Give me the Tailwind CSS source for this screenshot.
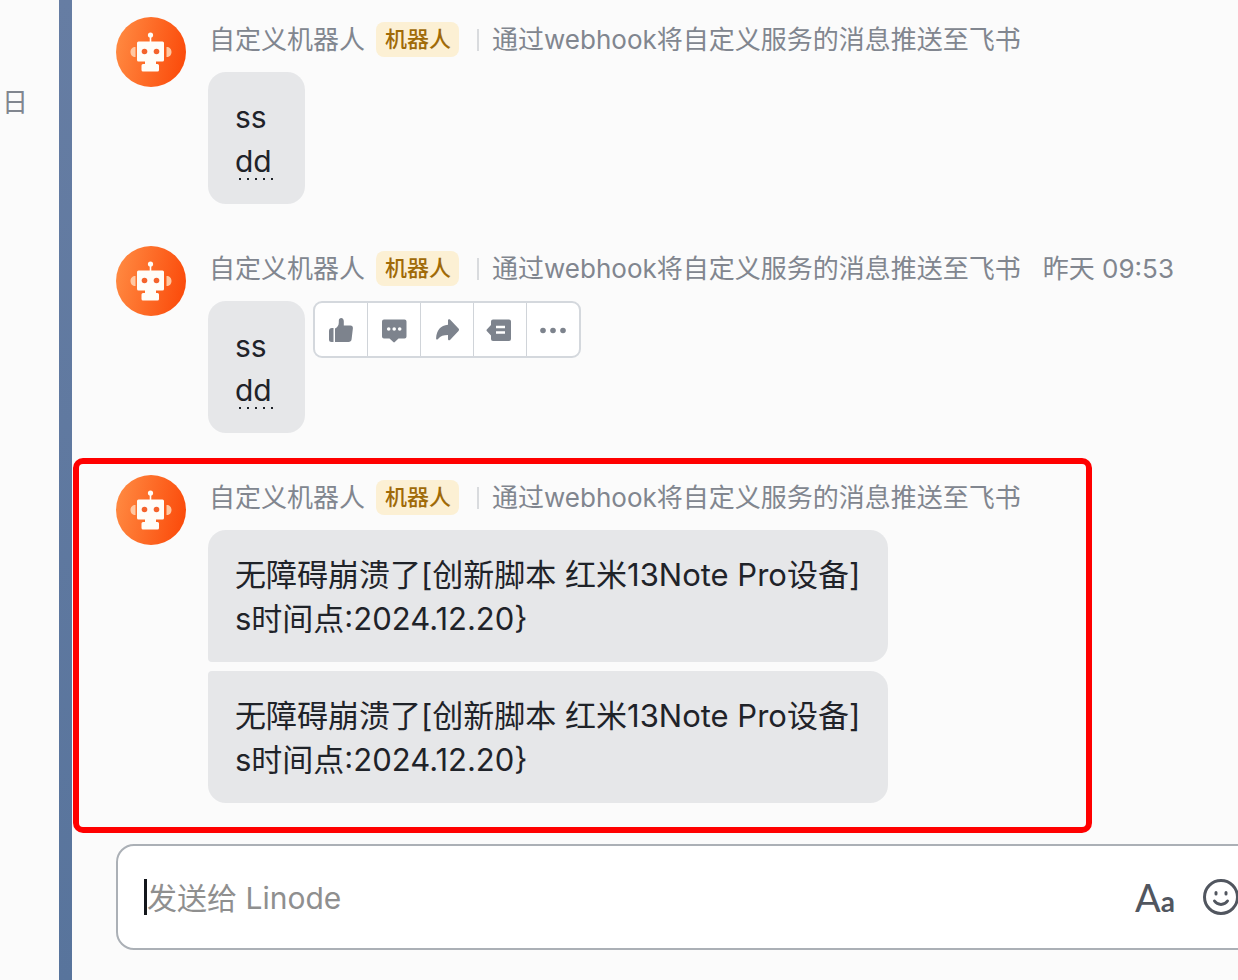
<!DOCTYPE html>
<html lang="zh-CN">
<head>
    <meta charset="UTF-8" />
    <meta name="viewport" content="width=device-width, initial-scale=1.0" />
    <title>飞书 - Linode</title>
    <script src="https://cdn.jsdelivr.net/npm/@tailwindcss/browser@4"></script>
</head>
<body class="flex min-h-screen overflow-hidden bg-[#fbfbfb] font-['Inter','Noto_Sans_CJK_SC',sans-serif] text-[#1f2329]">

    <!-- shared avatar -->
    <svg class="absolute size-0" aria-hidden="true">
        <defs>
            <linearGradient id="orange" x1="0" y1="0.4" x2="1" y2="0.6">
                <stop offset="0" stop-color="#ff8840" />
                <stop offset="1" stop-color="#fb4b0b" />
            </linearGradient>
        </defs>
        <symbol id="robot" viewBox="0 0 70 70">
            <circle cx="35" cy="35" r="35" fill="url(#orange)" />
            <path d="M19.5 30v10c-3 0-5-2-5-5s2-5 5-5zM50.5 30v10c3 0 5-2 5-5s-2-5-5-5z" fill="#ffc8a2" />
            <circle cx="34.5" cy="18" r="2.6" fill="#fffdf8" />
            <path d="M33.7 19h1.6v6h-1.6z" fill="#fffdf8" />
            <path d="M22.5 24.5h24a1.5 1.5 0 0 1 1.5 1.5v17a1.5 1.5 0 0 1-1.5 1.5h-6.5v2.5h1.5a1.5 1.5 0 0 1 1.5 1.5v4.500a1.5 1.5 0 0 1-1.5 1.5h-14.500a1.5 1.5 0 0 1-1.5-1.5v-4.500a1.5 1.5 0 0 1 1.5-1.5h2v-2.500h-6.500a1.5 1.5 0 0 1-1.5-1.5v-17a1.5 1.5 0 0 1 1.5-1.5z" fill="#fffdf8" />
            <circle cx="28.5" cy="34.5" r="2.8" fill="#f4632b" />
            <circle cx="40.5" cy="34.5" r="2.8" fill="#f4632b" />
        </symbol>
    </svg>

    <aside class="w-[59px] shrink-0 pt-[85px] pl-0.5 text-[26px] leading-9 text-[#81868f]">日</aside>
    <div class="w-[13px] shrink-0 bg-linear-to-b from-[#667da3] to-[#58749c]"></div>

    <main class="min-w-0 flex-1 pt-[17px] pl-11">
        <section class="flex flex-col gap-[42px]">
            <article class="flex items-start gap-[22px]">
                <svg class="size-[70px] shrink-0"><use href="#robot" /></svg>
                <div>
                    <header class="mb-3 flex h-[43px] items-center pt-0.5 pl-px text-[26px] whitespace-nowrap text-[#81868f]">
                        <span>自定义机器人</span>
                        <span class="ml-[11px] flex h-[35px] items-center rounded-lg bg-[#fcf0d4] pr-2 pl-[9px] text-[22px] font-medium text-[#a06a08]">机器人</span>
                        <span class="mr-[13px] ml-[18px] h-[22px] w-0.5 bg-[#d9dbde]"></span>
                        <span>通过webhook将自定义服务的消息推送至飞书</span>
                    </header>
                    <div class="w-fit min-w-[97px] rounded-[18px] bg-[#e6e7e9] pt-[23px] pr-7 pb-[21px] pl-[27px] text-[30px] leading-11">
                        <p>ss</p>
                        <p class="relative">dd<span class="absolute bottom-[3px] left-1 h-0.5 w-[34px] bg-[repeating-linear-gradient(to_right,#1f2329_0_2px,transparent_2px_8px)]"></span></p>
                    </div>
                </div>
            </article>

            <article class="flex items-start gap-[22px]">
                <svg class="size-[70px] shrink-0"><use href="#robot" /></svg>
                <div>
                    <header class="mb-3 flex h-[43px] items-center pt-0.5 pl-px text-[26px] whitespace-nowrap text-[#81868f]">
                        <span>自定义机器人</span>
                        <span class="ml-[11px] flex h-[35px] items-center rounded-lg bg-[#fcf0d4] pr-2 pl-[9px] text-[22px] font-medium text-[#a06a08]">机器人</span>
                        <span class="mr-[13px] ml-[18px] h-[22px] w-0.5 bg-[#d9dbde]"></span>
                        <span>通过webhook将自定义服务的消息推送至飞书</span>
                        <time class="ml-[22px]">昨天 09:53</time>
                    </header>
                    <div class="flex items-start gap-2">
                        <div class="w-fit min-w-[97px] rounded-[18px] bg-[#e6e7e9] pt-[23px] pr-7 pb-[21px] pl-[27px] text-[30px] leading-11">
                            <p>ss</p>
                            <p class="relative">dd<span class="absolute bottom-[3px] left-1 h-0.5 w-[34px] bg-[repeating-linear-gradient(to_right,#1f2329_0_2px,transparent_2px_8px)]"></span></p>
                        </div>
                        <!-- hover actions -->
                        <div class="flex h-[57px] divide-x divide-[#d0d4d9] rounded-[9px] border-2 border-[#d4d8dd] bg-white text-[#7d838d]">
                            <button type="button" aria-label="赞" class="flex w-[53px] items-center justify-center">
                                <svg class="size-7" viewBox="0 0 28 28" fill="currentColor">
                                    <path d="M6.500 12v14H4.500a2.500 2.500 0 0 1-2.500-2.500v-8.500a3 3 0 0 1 3-3z" />
                                    <path d="M8 12.500c2.600-1.300 3.800-3.200 3.800-6V4.800c0-1.800 1-2.800 2.400-2.800 1.600 0 2.600 1.300 2.600 3.200V9.500h6.700c1.600 0 2.600 1.200 2.400 2.700l-1.300 11c-.2 1.700-1.400 2.800-3.100 2.800H8z" />
                                </svg>
                            </button>
                            <button type="button" aria-label="回复" class="flex w-[53px] items-center justify-center">
                                <svg class="size-7" viewBox="0 0 28 28" fill="currentColor">
                                    <path d="M4 3.500h20.500a2 2 0 0 1 2 2v15a2 2 0 0 1-2 2H18.500L14.800 26a1 1 0 0 1-1.500 0L9.500 22.500H4a2 2 0 0 1-2-2v-15a2 2 0 0 1 2-2z" />
                                    <g fill="#fff"><circle cx="8.700" cy="13" r="1.800" /><circle cx="14.200" cy="13" r="1.800" /><circle cx="19.700" cy="13" r="1.800" /></g>
                                </svg>
                            </button>
                            <button type="button" aria-label="转发" class="flex w-[53px] items-center justify-center">
                                <svg class="size-7" viewBox="0 0 28 28" fill="currentColor">
                                    <path d="M15 4.500c0-1.200 1.200-1.700 2-.9l8.500 9c.7.800.7 1.500 0 2.300l-8.500 9c-.8.800-2 .4-2-.8v-4c-4.500 0-7.300 1-10 3.800-.9.900-2 .6-1.900-.7C3.500 14.500 7.500 9.200 15 8.700z" />
                                </svg>
                            </button>
                            <button type="button" aria-label="创建话题" class="flex w-[53px] items-center justify-center">
                                <svg class="size-7" viewBox="0 0 28 28" fill="currentColor">
                                    <path d="M7 3.500h16a2 2 0 0 1 2 2v17.500a2 2 0 0 1-2 2H7a2 2 0 0 1-2-2v-3.500L1 15.300a1.500 1.500 0 0 1 0-2.100L5 9V5.500a2 2 0 0 1 2-2z" />
                                    <path d="M10 11h9M10 16.500h9" stroke="#fff" stroke-width="2.400" />
                                </svg>
                            </button>
                            <button type="button" aria-label="更多" class="flex w-[52px] items-center justify-center">
                                <svg class="size-7" viewBox="0 0 28 28" fill="currentColor">
                                    <circle cx="4" cy="14.500" r="2.800" /><circle cx="14" cy="14.500" r="2.800" /><circle cx="24" cy="14.500" r="2.800" />
                                </svg>
                            </button>
                        </div>
                    </div>
                </div>
            </article>

            <article class="relative flex items-start gap-[22px]">
                <svg class="size-[70px] shrink-0"><use href="#robot" /></svg>
                <div>
                    <header class="mb-3 flex h-[43px] items-center pt-0.5 pl-px text-[26px] whitespace-nowrap text-[#81868f]">
                        <span>自定义机器人</span>
                        <span class="ml-[11px] flex h-[35px] items-center rounded-lg bg-[#fcf0d4] pr-2 pl-[9px] text-[22px] font-medium text-[#a06a08]">机器人</span>
                        <span class="mr-[13px] ml-[18px] h-[22px] w-0.5 bg-[#d9dbde]"></span>
                        <span>通过webhook将自定义服务的消息推送至飞书</span>
                    </header>
                    <div class="flex w-fit flex-col gap-[9px] text-[31px] leading-11">
                        <div class="rounded-[18px] rounded-bl-sm bg-[#e6e7e9] pt-[23px] pr-7 pb-[21px] pl-[27px]">
                            <p>无障碍崩溃了[创新脚本 红米13Note Pro设备]</p>
                            <p>s时间点:2024.12.20}</p>
                        </div>
                        <div class="rounded-[18px] rounded-tl-sm bg-[#e6e7e9] pt-[23px] pr-7 pb-[21px] pl-[27px]">
                            <p>无障碍崩溃了[创新脚本 红米13Note Pro设备]</p>
                            <p>s时间点:2024.12.20}</p>
                        </div>
                    </div>
                </div>
                <!-- red highlight round the message -->
                <div class="pointer-events-none absolute -top-[17px] right-[146px] -bottom-[30px] -left-[43px] rounded-[10px] border-6 border-[#ff0000]"></div>
            </article>
        </section>

        <form class="-mr-5 mt-[41px] flex h-[106px] items-center rounded-[18px] border-2 border-[#abb0b6] bg-white pr-[17px] pl-[26px]">
            <span class="h-9 w-[3px] bg-[#14171c]"></span>
            <input type="text" aria-label="消息" placeholder="发送给 Linode" class="h-12 min-w-0 flex-1 pt-0.5 text-[30px] outline-none placeholder:text-[#8f8f8f]" />
            <button type="button" aria-label="文字格式" class="flex items-baseline font-['Lato',sans-serif] text-[#51565f]">
                <span class="text-[38px]">A</span><span class="text-[28px] font-bold">a</span>
            </button>
            <button type="button" aria-label="表情" class="ml-7 text-[#51565f]">
                <svg class="size-9" viewBox="0 0 36 36" fill="none" stroke="currentColor" stroke-width="3" stroke-linecap="round">
                    <circle cx="18" cy="18" r="16.500" />
                    <path d="M13 13.500v1.500M23 13.500v1.500" />
                    <path d="M11.500 22c3.200 4.500 9.800 4.500 13 0" />
                </svg>
            </button>
        </form>
    </main>
</body>
</html>
